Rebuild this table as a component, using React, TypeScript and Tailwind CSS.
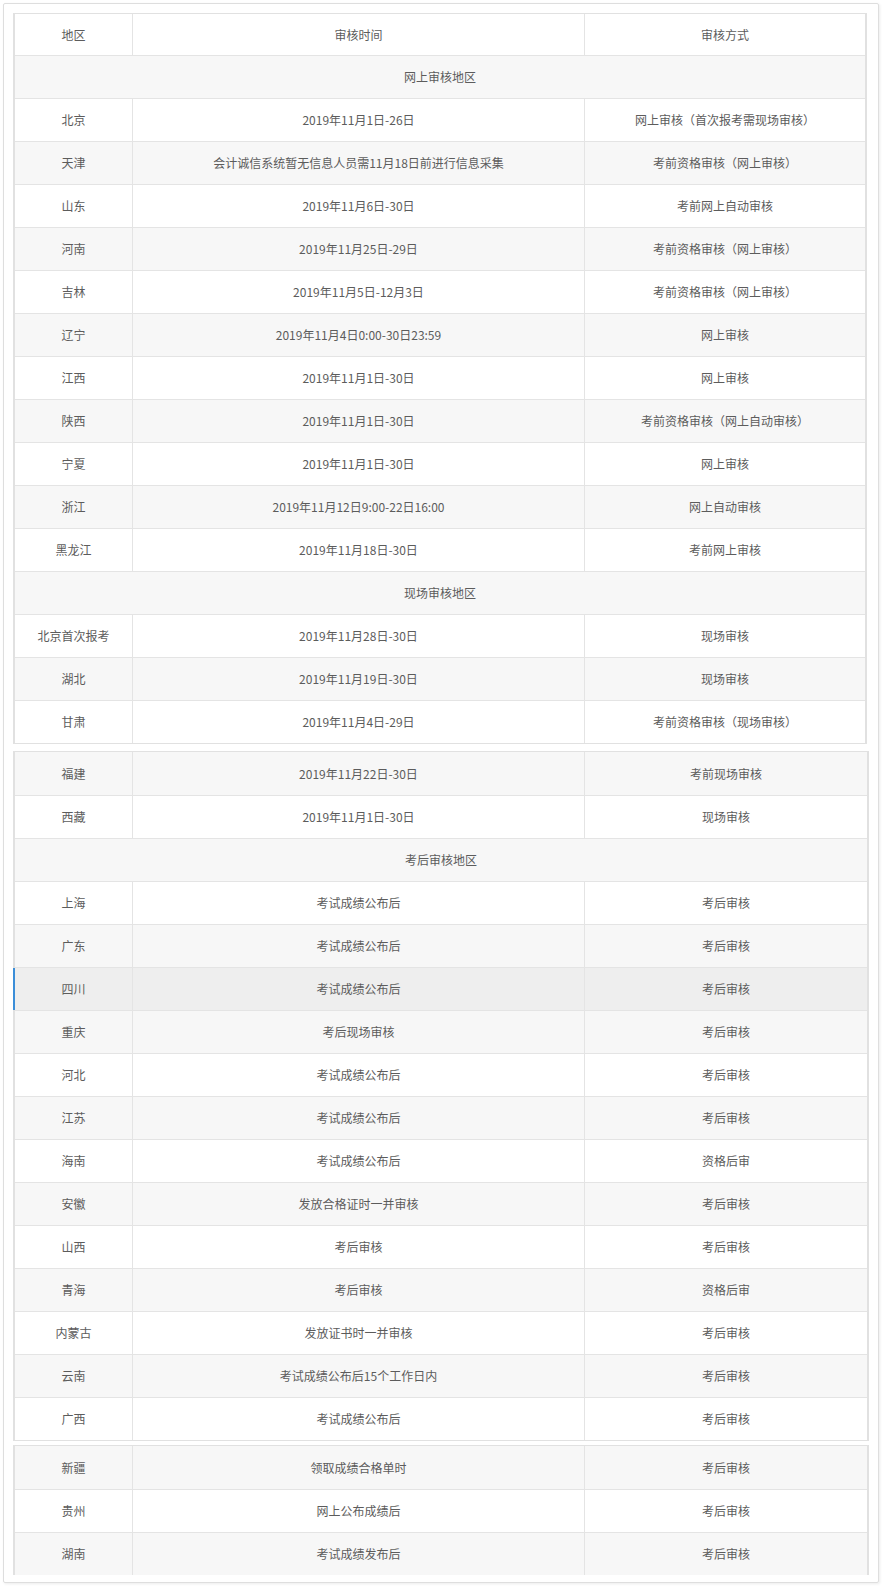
type Row =
  | { kind: "head"; a: string; b: string; c: string }
  | { kind: "section"; title: string }
  | { kind: "row"; a: string; b: string; c: string; active?: boolean };

const partOne: Row[] = [
  { kind: "head", a: "地区", b: "审核时间", c: "审核方式" },
  { kind: "section", title: "网上审核地区" },
  { kind: "row", a: "北京", b: "2019年11月1日-26日", c: "网上审核（首次报考需现场审核）" },
  { kind: "row", a: "天津", b: "会计诚信系统暂无信息人员需11月18日前进行信息采集", c: "考前资格审核（网上审核）" },
  { kind: "row", a: "山东", b: "2019年11月6日-30日", c: "考前网上自动审核" },
  { kind: "row", a: "河南", b: "2019年11月25日-29日", c: "考前资格审核（网上审核）" },
  { kind: "row", a: "吉林", b: "2019年11月5日-12月3日", c: "考前资格审核（网上审核）" },
  { kind: "row", a: "辽宁", b: "2019年11月4日0:00-30日23:59", c: "网上审核" },
  { kind: "row", a: "江西", b: "2019年11月1日-30日", c: "网上审核" },
  { kind: "row", a: "陕西", b: "2019年11月1日-30日", c: "考前资格审核（网上自动审核）" },
  { kind: "row", a: "宁夏", b: "2019年11月1日-30日", c: "网上审核" },
  { kind: "row", a: "浙江", b: "2019年11月12日9:00-22日16:00", c: "网上自动审核" },
  { kind: "row", a: "黑龙江", b: "2019年11月18日-30日", c: "考前网上审核" },
  { kind: "section", title: "现场审核地区" },
  { kind: "row", a: "北京首次报考", b: "2019年11月28日-30日", c: "现场审核" },
  { kind: "row", a: "湖北", b: "2019年11月19日-30日", c: "现场审核" },
  { kind: "row", a: "甘肃", b: "2019年11月4日-29日", c: "考前资格审核（现场审核）" },
];

const partTwo: Row[] = [
  { kind: "row", a: "福建", b: "2019年11月22日-30日", c: "考前现场审核" },
  { kind: "row", a: "西藏", b: "2019年11月1日-30日", c: "现场审核" },
  { kind: "section", title: "考后审核地区" },
  { kind: "row", a: "上海", b: "考试成绩公布后", c: "考后审核" },
  { kind: "row", a: "广东", b: "考试成绩公布后", c: "考后审核" },
  { kind: "row", a: "四川", b: "考试成绩公布后", c: "考后审核", active: true },
  { kind: "row", a: "重庆", b: "考后现场审核", c: "考后审核" },
  { kind: "row", a: "河北", b: "考试成绩公布后", c: "考后审核" },
  { kind: "row", a: "江苏", b: "考试成绩公布后", c: "考后审核" },
  { kind: "row", a: "海南", b: "考试成绩公布后", c: "资格后审" },
  { kind: "row", a: "安徽", b: "发放合格证时一并审核", c: "考后审核" },
  { kind: "row", a: "山西", b: "考后审核", c: "考后审核" },
  { kind: "row", a: "青海", b: "考后审核", c: "资格后审" },
  { kind: "row", a: "内蒙古", b: "发放证书时一并审核", c: "考后审核" },
  { kind: "row", a: "云南", b: "考试成绩公布后15个工作日内", c: "考后审核" },
  { kind: "row", a: "广西", b: "考试成绩公布后", c: "考后审核" },
];

const partThree: Row[] = [
  { kind: "row", a: "新疆", b: "领取成绩合格单时", c: "考后审核" },
  { kind: "row", a: "贵州", b: "网上公布成绩后", c: "考后审核" },
  { kind: "row", a: "湖南", b: "考试成绩发布后", c: "考后审核" },
];

const TableBlock = ({
  rows,
  grayFirst,
  wide,
  noBottom,
}: {
  rows: Row[];
  grayFirst: boolean;
  wide?: boolean;
  noBottom?: boolean;
}) => {
  return (
    <div
      className={`${wide ? "w-[856px]" : "w-[854px]"} border-x-2 border-t ${
        noBottom ? "" : "border-b"
      } border-[#e1e1e1]`}
    >
      {rows.map((row, i) => {
        const gray = grayFirst ? i % 2 === 0 : i % 2 === 1;
        const active = row.kind === "row" && row.active;
        const bg = active ? "bg-[#eeeeee]" : gray ? "bg-[#f7f7f7]" : "bg-white";
        const top = i === 0 ? "" : "border-t border-[#e4e4e4]";
        const height = row.kind === "head" ? "h-[41px]" : "h-[43px]";

        if (row.kind === "section") {
          return (
            <div
              key={i}
              className={`${height} ${bg} ${top} flex items-center justify-center`}
            >
              {row.title}
            </div>
          );
        }

        return (
          <div
            key={i}
            className={`${height} ${bg} ${top} relative grid grid-cols-[117px_452px_1fr]`}
          >
            {active && (
              <div className="absolute -left-[2px] top-0 bottom-0 w-[2px] bg-[#3b8ed8]" />
            )}
            <div className="flex items-center justify-center">{row.a}</div>
            <div className="flex items-center justify-center border-l border-[#e4e4e4]">
              {row.b}
            </div>
            <div className="flex items-center justify-center border-l border-[#e4e4e4]">
              {row.c}
            </div>
          </div>
        );
      })}
    </div>
  );
};

export default function App() {
  return (
    <div className="w-[882px] h-[1587px] bg-white pt-[3px] pl-[3px]">
      <div
        className="w-[876px] h-[1580px] border border-[#dedede] rounded-[2px] shadow-[1px_1px_3px_rgba(0,0,0,0.08)] pt-[9px] pl-[9px] flex flex-col text-[12px] text-[#5c5c5c]"
        style={{ fontFamily: '"Noto Sans CJK SC", "Noto Sans", sans-serif' }}
      >
        <TableBlock rows={partOne} grayFirst={false} />
        <div className="h-[7px]" />
        <TableBlock rows={partTwo} grayFirst={true} wide />
        <div className="h-[4px]" />
        <TableBlock rows={partThree} grayFirst={true} wide noBottom />
      </div>
    </div>
  );
}
